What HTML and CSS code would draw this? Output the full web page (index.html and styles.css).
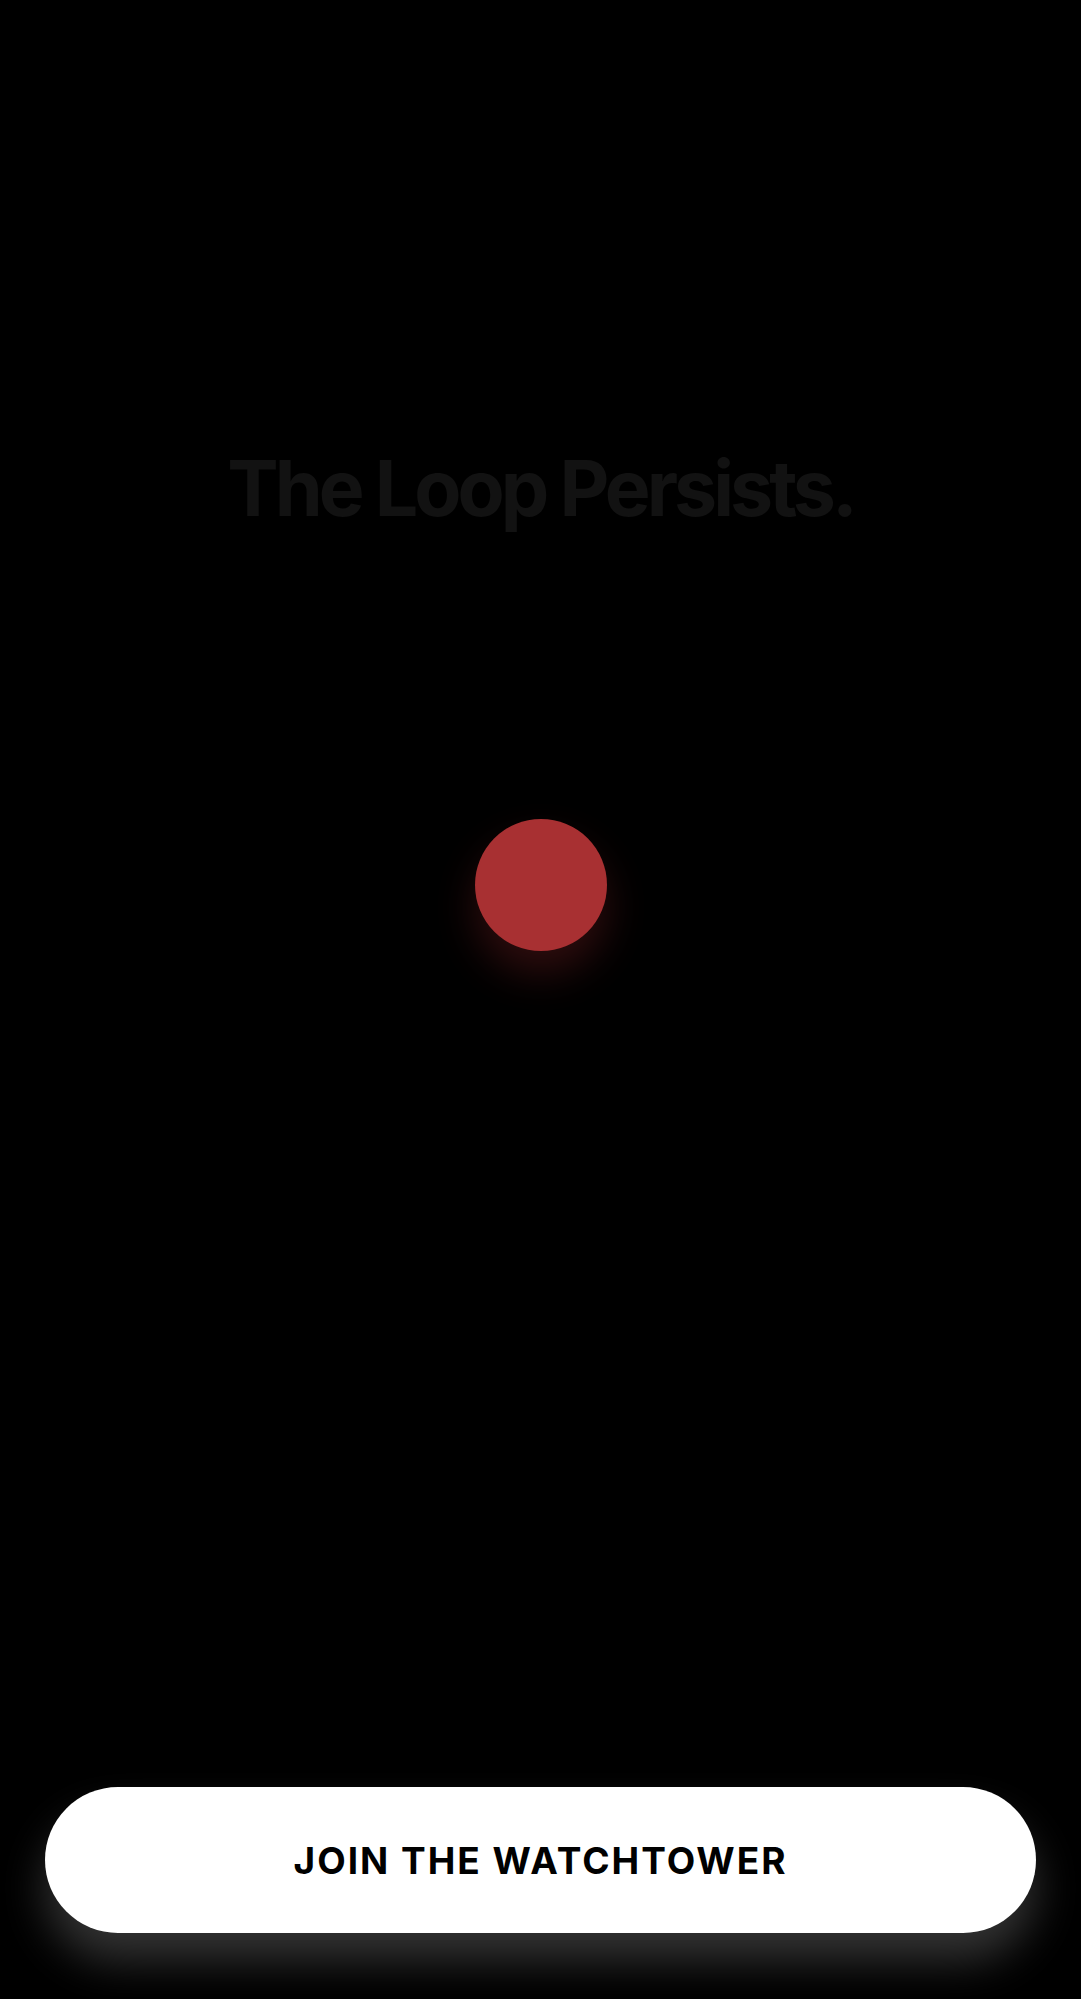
FILE: index.html
```html
<!DOCTYPE html>
<html lang="en">
<head>
<meta charset="utf-8">
<title>The Loop Persists.</title>
<link rel="stylesheet" href="styles.css">
</head>
<body>
<main class="screen">
  <h1 class="title">The Loop Persists.</h1>
  <div class="stage">
    <div class="dot"></div>
  </div>
  <div class="footer">
    <button class="cta">JOIN THE WATCHTOWER</button>
  </div>
</main>
</body>
</html>
```

FILE: styles.css
```css
html, body {
  margin: 0;
  padding: 0;
  background: #000;
  height: 100%;
}
.screen {
  height: 1999px;
  display: flex;
  flex-direction: column;
  align-items: stretch;
  font-family: Inter, "Noto Sans", sans-serif;
  overflow: hidden;
}
.title {
  margin: 442px 0 0;
  text-align: center;
  font-size: 77px;
  line-height: 93px;
  font-weight: 700;
  letter-spacing: -4px;
  color: #121212;
}
.stage {
  display: flex;
  justify-content: center;
  margin-top: 284px;
}
.dot {
  width: 132px;
  height: 132px;
  border-radius: 50%;
  background: #a83032;
  box-shadow: 0 22px 40px rgba(168, 48, 50, 0.28);
}
.footer {
  margin-top: auto;
  padding: 0 45px 66px;
}
.cta {
  display: block;
  width: 100%;
  height: 146px;
  border: none;
  border-radius: 73px;
  background: #fff;
  color: #000;
  font-family: Inter, "Noto Sans", sans-serif;
  font-size: 37px;
  font-weight: 700;
  letter-spacing: 2px;
  box-shadow: 0 28px 44px rgba(255, 255, 255, 0.2);
  cursor: pointer;
}
```
